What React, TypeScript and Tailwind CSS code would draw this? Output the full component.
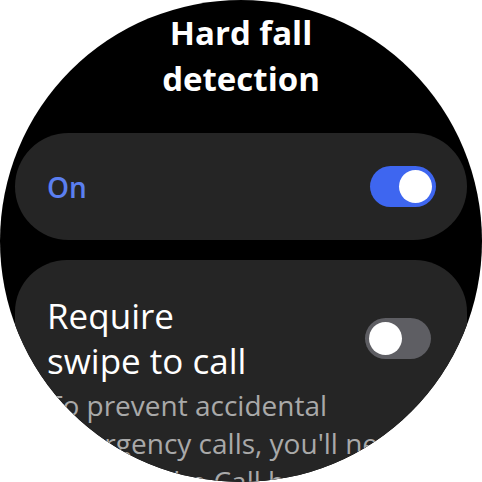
import clsx from 'clsx'

const font = { fontFamily: '"Open Sans", Roboto, "Liberation Sans", sans-serif' }

const Toggle = ({ on }: { on: boolean }) => (
  <div
    className={clsx(
      'flex h-[41px] w-[66px] shrink-0 items-center rounded-full px-[4px]',
      on ? 'justify-end bg-[#3e66f0]' : 'justify-start bg-[#5e5e63]'
    )}>
    <div className="h-[33px] w-[33px] rounded-full bg-white" />
  </div>
)

export default function App() {
  return (
    <div className="h-[482px] w-[482px] bg-white" style={font}>
      <div className="flex h-full w-full flex-col overflow-hidden rounded-full bg-black">
        <h1 className="pt-[10px] text-center text-[33px] font-bold leading-[46px] text-white">
          Hard fall
          <br />
          detection
        </h1>
        <div className="mt-[31px] flex flex-col gap-[20px] px-[15px]">
          <div className="flex h-[107px] items-center justify-between rounded-full bg-[#252525] pl-[32px] pr-[31px]">
            <span className="text-[28px] font-semibold text-[#5b7ff0]">On</span>
            <Toggle on />
          </div>
          <div className="rounded-t-[52px] bg-[#252525] pl-[32px] pr-[36px] pt-[33px]">
            <div className="flex items-center justify-between">
              <span className="text-[35px] leading-[45px] text-white">
                Require
                <br />
                swipe to call
              </span>
              <Toggle on={false} />
            </div>
            <p className="mt-[3px] text-[28px] leading-[38px] text-[#a9a9a9]">
              To prevent accidental emergency calls, you'll need to swipe the Call button.
            </p>
          </div>
        </div>
      </div>
    </div>
  )
}
